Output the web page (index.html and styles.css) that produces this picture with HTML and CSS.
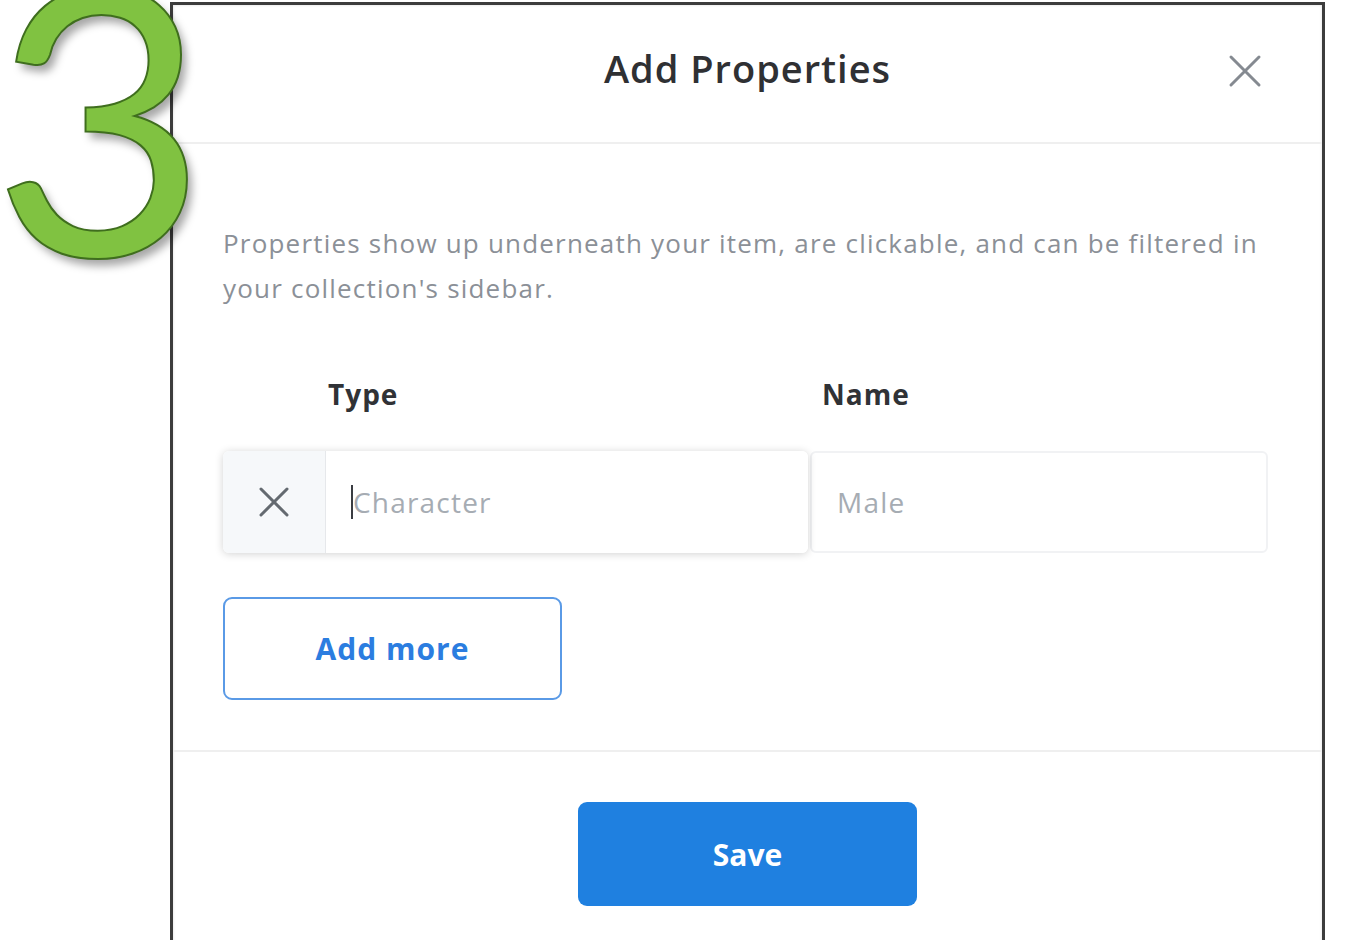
FILE: index.html
```html
<!DOCTYPE html>
<html>
<head>
<meta charset="utf-8">
<link rel="stylesheet" href="styles.css">
</head>
<body>
<div class="stage">
  <div class="step-number">3</div>
  <div class="modal">
    <div class="modal-header">
      <h1 class="modal-title">Add Properties</h1>
      <button class="close-btn" aria-label="Close">
        <svg width="34" height="34" viewBox="0 0 34 34"><path d="M3 3 L31 31 M31 3 L3 31" stroke="#858a91" stroke-width="3" stroke-linecap="round"/></svg>
      </button>
    </div>
    <div class="modal-body">
      <p class="desc">Properties show up underneath your item, are clickable, and can be filtered in your collection's sidebar.</p>
      <div class="labels">
        <div class="label label-type">Type</div>
        <div class="label label-name">Name</div>
      </div>
      <div class="prop-row">
        <div class="type-group">
          <div class="remove-cell">
            <svg width="32" height="32" viewBox="0 0 32 32"><path d="M3 3 L29 29 M29 3 L3 29" stroke="#646a70" stroke-width="3" stroke-linecap="round"/></svg>
          </div>
          <div class="type-input"><span class="caret"></span><span class="placeholder">Character</span></div>
        </div>
        <div class="name-input"><span class="placeholder">Male</span></div>
      </div>
      <button class="add-more">Add more</button>
    </div>
    <div class="modal-footer">
      <button class="save-btn">Save</button>
    </div>
  </div>
</div>
</body>
</html>
```
FILE: styles.css
```css
html, body {
  margin: 0;
  padding: 0;
  background: #ffffff;
  overflow: hidden;
}
body {
  width: 1348px;
  height: 940px;
  font-family: "Open Sans", "Lato", sans-serif;
}
.stage {
  position: relative;
  padding: 2px 0 0 170px;
  height: 938px;
}
.step-number {
  position: absolute;
  left: -8px;
  top: -74px;
  z-index: 5;
  font-family: "Lato", sans-serif;
  font-weight: 400;
  font-size: 372px;
  line-height: 1;
  color: #80c241;
  -webkit-text-stroke: 2px #3f6e1e;
  text-shadow: 5px 7px 9px rgba(0,0,0,0.35);
}
.modal {
  width: 1149px;
  height: 960px;
  border: 3px solid #3c3c3c;
  border-bottom: none;
  background: #fff;
  box-shadow: inset 0 0 3px rgba(0,0,0,0.15);
}
.modal-header {
  position: relative;
  height: 137px;
  border-bottom: 2px solid #efefef;
  display: flex;
  align-items: center;
  justify-content: center;
}
.modal-title {
  margin: 0 0 10px 0;
  font-size: 38px;
  font-weight: 600;
  color: #2f3033;
  line-height: 1.2;
  letter-spacing: 1px;
}
.close-btn {
  position: absolute;
  right: 60px;
  top: 49px;
  border: none;
  background: none;
  padding: 0;
  width: 34px;
  height: 34px;
}
.modal-body {
  padding: 77px 54px 50px 50px;
  border-bottom: 2px solid #efefef;
}
.desc {
  margin: 0;
  max-width: 1047px;
  font-size: 26px;
  line-height: 45px;
  letter-spacing: 1.2px;
  color: #8b9097;
}
.labels {
  display: flex;
  margin-top: 66px;
  height: 34px;
}
.label {
  font-size: 28px;
  font-weight: 700;
  color: #303236;
  line-height: 34px;
  letter-spacing: 1px;
}
.label-type {
  padding-left: 105px;
  width: 494px;
}
.prop-row {
  display: flex;
  margin-top: 40px;
  height: 102px;
}
.type-group {
  display: flex;
  width: 585px;
  border-radius: 6px;
  box-shadow: 0 1px 8px rgba(0,0,0,0.18);
  overflow: hidden;
  position: relative;
  z-index: 1;
}
.remove-cell {
  width: 102px;
  background: #f6f8fa;
  border-right: 1px solid #e6e8eb;
  display: flex;
  align-items: center;
  justify-content: center;
}
.type-input {
  flex: 1;
  background: #fff;
  display: flex;
  align-items: center;
  padding-left: 25px;
}
.caret {
  width: 2px;
  height: 34px;
  background: #3a3d42;
}
.placeholder {
  font-size: 28px;
  letter-spacing: 1.2px;
  color: #a6acb3;
}
.name-input {
  margin-left: 2px;
  width: 458px;
  border: 2px solid #f1f2f4;
  border-radius: 6px;
  display: flex;
  align-items: center;
  padding-left: 25px;
  box-sizing: border-box;
}
.add-more {
  display: block;
  margin-top: 44px;
  width: 339px;
  height: 103px;
  border: 2px solid #5a9ae6;
  border-radius: 9px;
  background: #fff;
  color: #2b7de0;
  font-family: "Open Sans", sans-serif;
  font-size: 30px;
  font-weight: 700;
  letter-spacing: 1px;
}
.modal-footer {
  display: flex;
  justify-content: center;
  padding-top: 50px;
}
.save-btn {
  width: 339px;
  height: 104px;
  border: none;
  border-radius: 9px;
  background: #1f80e0;
  color: #fff;
  font-family: "Open Sans", sans-serif;
  font-size: 30px;
  font-weight: 700;
}
```
